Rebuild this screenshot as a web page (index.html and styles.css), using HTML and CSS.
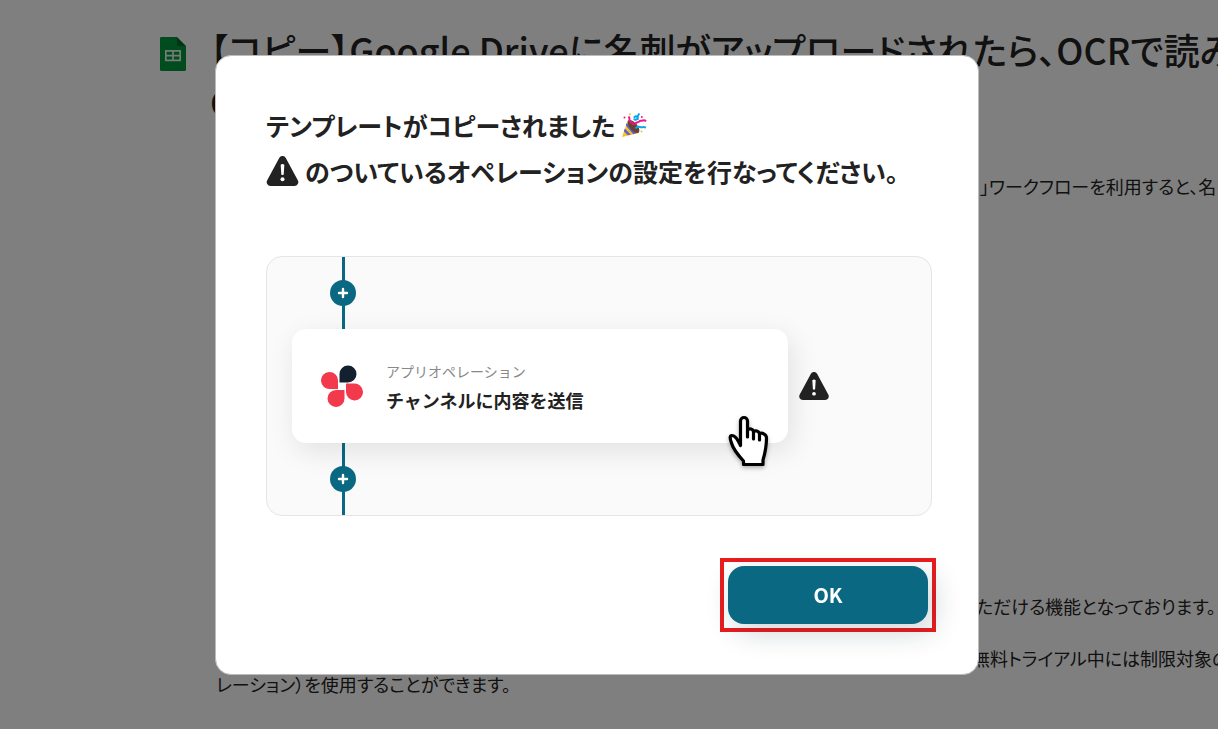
FILE: index.html
```
<!DOCTYPE html>
<html lang="ja">
<head>
    <meta charset="UTF-8">
    <meta name="viewport" content="width=device-width, initial-scale=1.0">
    <title>テンプレート</title>
    <link rel="stylesheet" href="styles.css">
</head>
<body>
    <main class="page">
        <header class="page-header">
            <svg class="sheet-icon" viewBox="0 0 26 34" aria-hidden="true">
                <path fill="#006b2c" d="M2 0h15l9 9v23a2 2 0 0 1-2 2H2a2 2 0 0 1-2-2V2a2 2 0 0 1 2-2z"/>
                <path fill="#00983f" d="M2 0h15v9h9v23a2 2 0 0 1-2 2H2a2 2 0 0 1-2-2V2a2 2 0 0 1 2-2z"/>
                <path fill="none" stroke="#e8f5ec" stroke-width="1.7" d="M5.8 13.8h14.4v9.6H5.8zM13 13.8v9.6M5.8 18.6h14.4"/>
            </svg>
            <h1 class="page-title">【コピー】Google Driveに名刺がアップロードされたら、OCRで読み<br>Google スプレッドシートに追加する</h1>
        </header>
        <div class="page-body">
            <p class="intro">」ワークフローを利用すると、名</p>
            <p class="note">ただける機能となっております。</p>
            <p class="trial">無料トライアル中には制限対象の</p>
            <p>レーション）を使用することができます。</p>
        </div>
    </main>

    <div class="overlay">
        <div class="modal" role="dialog" aria-modal="true" aria-labelledby="modal-title">
            <h2 class="modal-title" id="modal-title">
                <span class="title-row">テンプレートがコピーされました
                    <svg class="party-icon" viewBox="0 0 26 24" aria-hidden="true">
                        <path fill="#fcc21b" d="M7 7L18 20 1 24z"/>
                        <path fill="#5b62d9" d="M5.600 10l9.800 10.200-3.200 1L4.800 12.500zM3.800 15.400l6 6-3 .9-4-4z"/>
                        <ellipse fill="#68432f" cx="12.500" cy="13.500" rx="3.800" ry="8" transform="rotate(-40 12.500 13.500)"/>
                        <path fill="none" stroke="#ed1590" stroke-width="2" d="M7.500 3.500c2 1.500 0 4 1.700 5.200s2.800 1.500 3.300 3.300M14 11.500c1-3.500 3-1.500 4.200-3s1.800-.4 2.800-.8 2.500-1 4 .7"/>
                        <path fill="none" stroke="#12a4e8" stroke-width="2" d="M13.200 5c.3-2 2.800-2.500 3.200-.5s-2.800 3.500-3.300 1M18.500.5c-2 1.500-2 4-1.800 6.500M14.500 15.500c2-3 4-1.500 5.500-1.200s2-1 5 .4"/>
                        <g fill="#ed1590"><circle cx="3.500" cy="4.500" r="1"/><circle cx="20.800" cy="4" r="1"/></g>
                        <g fill="#fcc21b"><circle cx="8.800" cy="1.200" r="1"/><circle cx="20.500" cy="18.500" r="1"/></g>
                    </svg>
                </span>
                <span class="title-row">
                    <svg class="warn-icon" viewBox="0 0 32 30" aria-hidden="true">
                        <path fill="#222" d="M12.700 1.900a3.800 3.800 0 0 1 6.600 0l12 22.300a3.800 3.800 0 0 1-3.300 5.700H4a3.800 3.800 0 0 1-3.300-5.700z"/>
                        <path fill="#fff" d="M14.200 8.800q1.800-1.500 3.600 0l-.6 9.700q-1.200 1-2.400 0z"/>
                        <circle fill="#fff" cx="16" cy="23.300" r="2"/>
                    </svg>
                    のついているオペレーションの設定を行なってください。
                </span>
            </h2>

            <div class="preview">
                <div class="connector">
                    <svg class="plus-icon" viewBox="0 0 26 26" aria-hidden="true"><circle fill="#0b6882" cx="13" cy="13" r="13"/><path stroke="#fff" stroke-width="2.400" stroke-linecap="round" d="M13 9v8M9 13h8"/></svg>
                </div>
                <div class="card-row">
                    <div class="card">
                        <svg class="app-logo" viewBox="0 0 42 42" aria-hidden="true">
                            <path fill="#132030" d="M18.500 17.500V9a8.500 8.500 0 1 1 8.500 8.500z"/>
                            <path fill="#f23a4c" d="M17 24H9.200A8.500 8.500 0 1 1 17 15.400z"/>
                            <path fill="#f23a4c" d="M25 18.500h8a8.500 8.500 0 1 1-8 8.600z"/>
                            <path fill="#f23a4c" d="M23.500 25v8.200A8.500 8.500 0 1 1 15 25z"/>
                        </svg>
                        <div class="card-text">
                            <div class="card-label">アプリオペレーション</div>
                            <div class="card-name">チャンネルに内容を送信</div>
                        </div>
                        <svg class="hand-icon" viewBox="0 0 42 52" aria-hidden="true">
                            <path fill="#fff" stroke="#000" stroke-width="3.200" stroke-linejoin="round" d="M15.500 49.500v-3.500C10 40 5 34 3.500 28 2 24 1.500 21 3.500 20.500c4 0 6 4 9 10V6a3.500 3.500 0 0 1 7 0v9c2-2 5.500-1 6 1.500 2-1.500 5-.5 6 2 3-1 7 1 7 4.500 0 9-2 17-3.500 22v4.500z"/>
                            <path fill="none" stroke="#000" stroke-width="3.200" stroke-linecap="round" d="M19.500 15v7M25.500 16v8M31.500 18v7"/>
                        </svg>
                    </div>
                    <svg class="card-warn" viewBox="0 0 32 30" aria-hidden="true">
                        <path fill="#222" d="M12.700 1.900a3.800 3.800 0 0 1 6.600 0l12 22.300a3.800 3.800 0 0 1-3.300 5.700H4a3.800 3.800 0 0 1-3.300-5.700z"/>
                        <path fill="#fff" d="M14.200 8.800q1.800-1.500 3.600 0l-.6 9.700q-1.200 1-2.400 0z"/>
                        <circle fill="#fff" cx="16" cy="23.300" r="2"/>
                    </svg>
                </div>
                <div class="connector">
                    <svg class="plus-icon" viewBox="0 0 26 26" aria-hidden="true"><circle fill="#0b6882" cx="13" cy="13" r="13"/><path stroke="#fff" stroke-width="2.400" stroke-linecap="round" d="M13 9v8M9 13h8"/></svg>
                </div>
            </div>

            <div class="modal-footer">
                <div class="highlight">
                    <button class="ok-button" type="button">OK</button>
                </div>
            </div>
        </div>
    </div>
</body>
</html>
```
FILE: styles.css
```
* {
    box-sizing: border-box;
}

body {
    margin: 0;
    background-color: #fff;
    color: #222;
    font-family: "Noto Sans CJK JP", sans-serif;
    overflow: hidden;
}

h1, h2, p {
    margin: 0;
}

/* page behind the dialog */
.page {
    padding: 23px 0 0 160px;
    font-feature-settings: "palt";
    white-space: nowrap;
}

.page-header {
    display: flex;
    gap: 24px;
}

.sheet-icon {
    flex: none;
    width: 26px;
    height: 34px;
    margin-top: 14px;
}

.page-title {
    font-size: 36px;
    font-weight: 500;
    line-height: 52px;
}

.page-body {
    padding: 46px 0 0 56px;
    font-size: 18px;
    line-height: 26px;
}

.intro {
    padding-left: 764px;
}

.note {
    margin: 394px 0 26px;
    padding-left: 760px;
}

.trial {
    padding-left: 756px;
}

/* dialog */
.overlay {
    position: fixed;
    inset: 0;
    display: flex;
    align-items: center;
    justify-content: center;
    padding-right: 24px;
    background-color: rgba(0, 0, 0, 0.5);
}

.modal {
    width: 764px;
    max-width: 100%;
    padding: 46px 42px 42px 50px;
    border: 1px solid #bbb;
    border-radius: 16px;
    background-color: #fff;
}

.modal-title {
    font-size: 25px;
    font-weight: 600;
    font-feature-settings: "palt";
    line-height: 46px;
}

.title-row {
    display: flex;
    align-items: center;
    gap: 6px;
}

.party-icon {
    width: 26px;
    height: 24px;
}

.warn-icon {
    width: 33px;
    height: 30px;
}

.preview {
    margin: 62px 4px 42px 0;
    border: 1px solid #e5e5e5;
    border-radius: 16px;
    background-color: #fafafa;
}

.connector {
    display: flex;
    align-items: center;
    width: 26px;
    height: 72px;
    margin-left: 63px;
    background: linear-gradient(#0b6882, #0b6882) center / 3px 100% no-repeat;
}

.plus-icon {
    width: 26px;
    height: 26px;
}

.card-row {
    display: flex;
    align-items: center;
    gap: 11px;
    padding-left: 25px;
}

.card {
    position: relative;
    display: flex;
    align-items: center;
    gap: 23px;
    width: 496px;
    height: 114px;
    padding-left: 29px;
    border-radius: 14px;
    background-color: #fff;
    box-shadow: 4px 8px 28px rgba(0, 0, 0, 0.1);
}

.app-logo {
    width: 42px;
    height: 42px;
}

.card-label {
    color: #888;
    font-size: 14px;
    line-height: 28px;
}

.card-name {
    font-size: 18px;
    font-weight: 600;
    line-height: 30px;
}

.hand-icon {
    position: absolute;
    right: 18px;
    bottom: -24px;
    width: 42px;
    height: 52px;
    filter: drop-shadow(0 2px 2px rgba(0, 0, 0, 0.3));
}

.card-warn {
    width: 30px;
    height: 28px;
}

.modal-footer {
    display: flex;
    justify-content: flex-end;
}

.highlight {
    padding: 4px;
    border: 4px solid #e91d1d;
}

.ok-button {
    display: block;
    width: 200px;
    height: 58px;
    border: none;
    border-radius: 16px;
    background-color: #0b6882;
    box-shadow: 6px 8px 28px rgba(20, 40, 60, 0.2);
    color: #fff;
    font-family: inherit;
    font-size: 20px;
    font-weight: 600;
    cursor: pointer;
}
```
